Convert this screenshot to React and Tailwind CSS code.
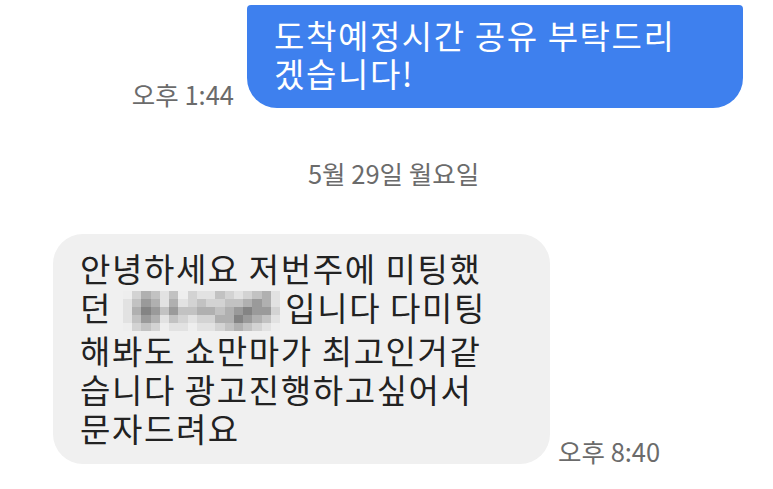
import React from "react";

const shades = [
    "bg-[#eeeeee]",
    "bg-[#e2e2e2]",
    "bg-[#d3d3d3]",
    "bg-[#c2c2c2]",
    "bg-[#b0b0b0]",
    "bg-[#9a9a9a]",
    "bg-[#848484]",
];

const mosaic = [
    "02431302113212341",
    "13541412322334541",
    "14653533443456552",
    "13541321224465431",
    "02320110112343210",
];

function Mosaic() {
    return (
        <span className="inline-flex flex-col align-middle ml-[11px] mr-[5px] -mt-[2px]">
            {mosaic.map((row, r) => (
                <span key={r} className="flex">
                    {row.split("").map((c, i) => (
                        <span key={i} className={`w-[9.25px] h-[8px] ${shades[Number(c)]}`} />
                    ))}
                </span>
            ))}
        </span>
    );
}

export default function App() {
    return (
        <div className="w-[773px] h-[489px] bg-white overflow-hidden flex flex-col" style={{ fontFamily: '"Noto Sans CJK KR", "Noto Sans", sans-serif' }}>
            {/* sent */}
            <div className="flex justify-end items-end gap-[13px] pr-[30px] pt-[5px]">
                <span className="text-[25.5px] leading-none text-[#6b6b6b] pb-[2px]">오후 1:44</span>
                <div className="w-[496px] h-[103px] bg-[#3e80ee] text-white rounded-t-[4px] rounded-b-[30px] pl-[27px] pt-[11px] text-[33px] leading-[38px] tracking-[1.6px]">
                    도착예정시간 공유 부탁드리<br />겠습니다!
                </div>
            </div>

            {/* date */}
            <div className="flex justify-center pl-[14px] mt-[52px] text-[25.5px] leading-none text-[#6b6b6b]">
                5월 29일 월요일
            </div>

            {/* received */}
            <div className="flex items-end gap-[8px] pl-[53px] mt-[48px]">
                <div className="w-[497px] h-[230px] bg-[#f0f0f0] text-[#222222] rounded-[30px] pl-[27px] pt-[15px] text-[33px] leading-[39px] tracking-[1.6px]">
                    안녕하세요 저번주에 미팅했<br />
                    던<Mosaic />입니다 다미팅<br />
                    해봐도 쇼만마가 최고인거같<br />
                    습니다 광고진행하고싶어서<br />
                    문자드려요
                </div>
                <span className="text-[25.5px] leading-none text-[#6b6b6b] pb-[0px]">오후 8:40</span>
            </div>
        </div>
    );
}
